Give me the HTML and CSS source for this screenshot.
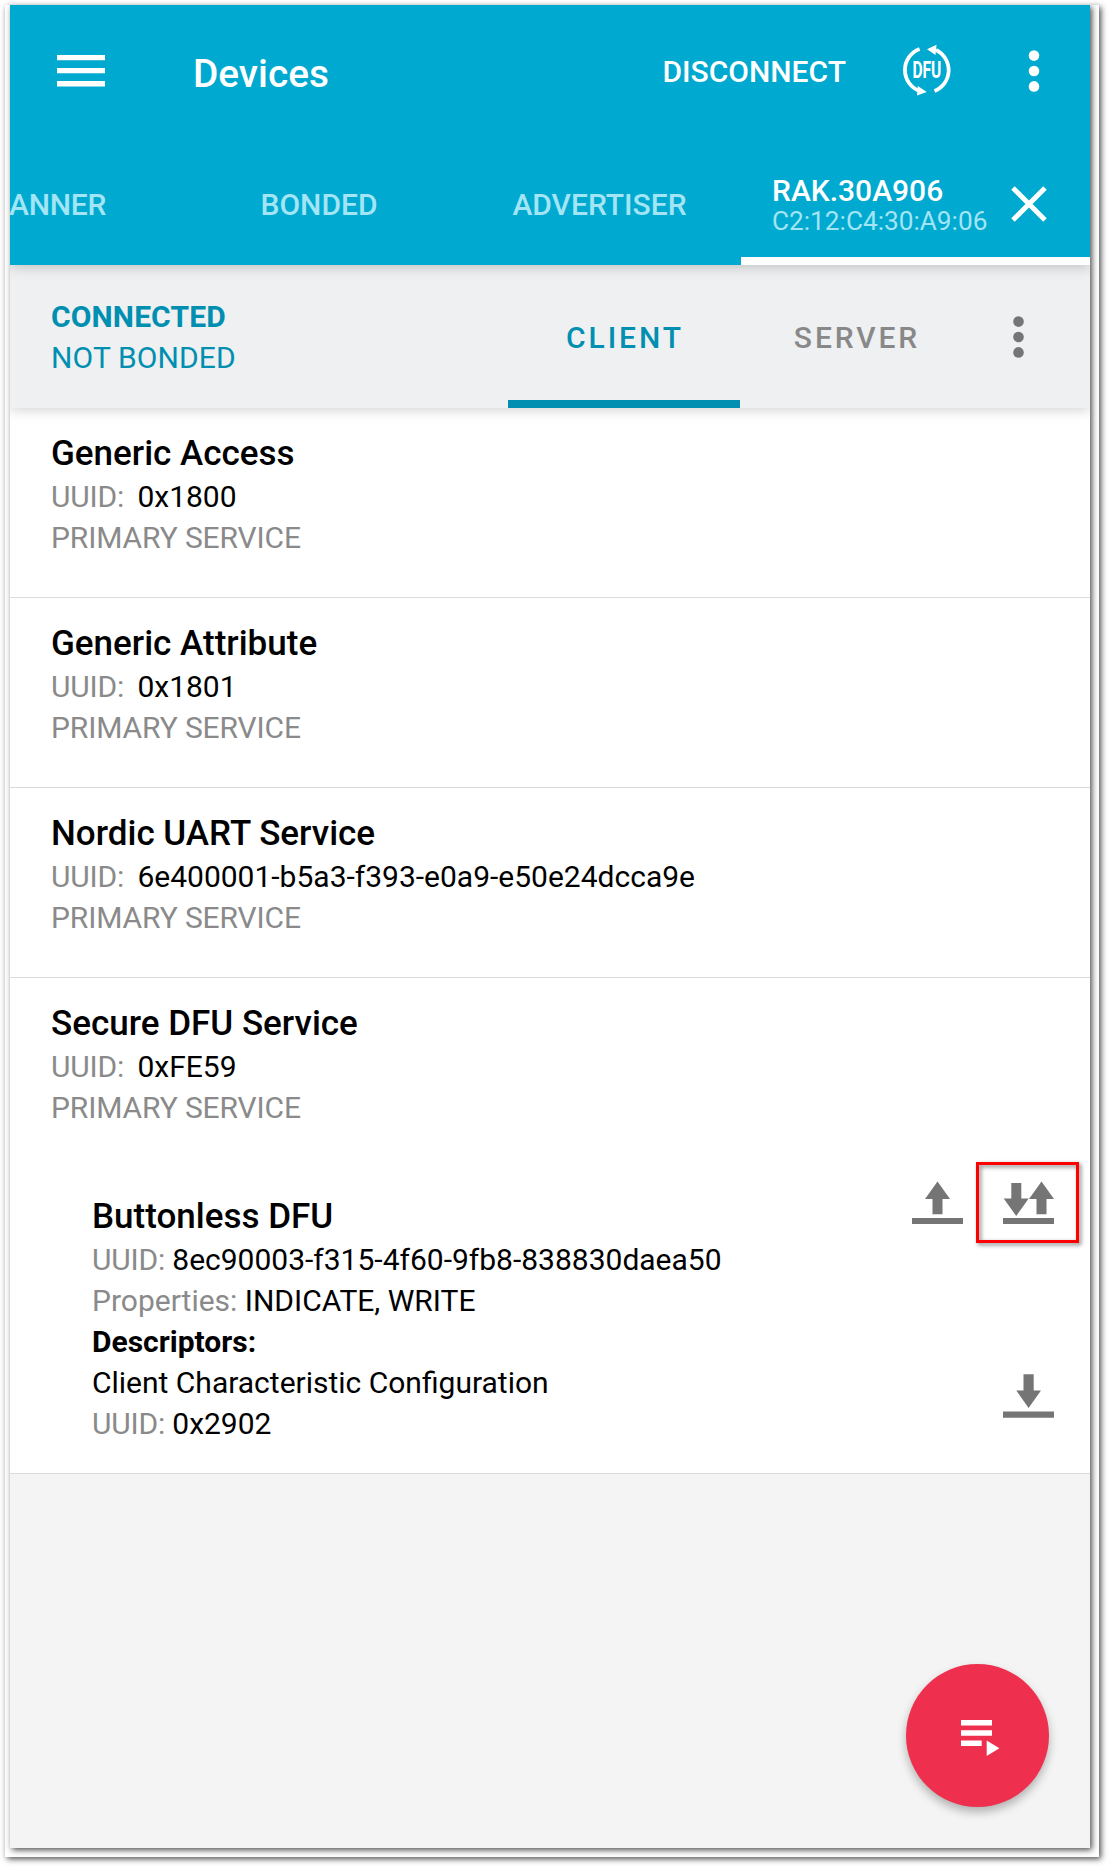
FILE: index.html
```html
<!DOCTYPE html>
<html lang="en">
<head>
<meta charset="utf-8">
<title>Devices</title>
<link rel="stylesheet" href="styles.css">
</head>
<body>
<div class="frame">
<main class="screen">
  <header class="appbar">
    <div class="toolbar">
      <svg class="menu" width="48" height="32" viewBox="0 0 48 32" fill="#fff"><path d="M0 0h48v5.3H0zM0 13h48v5.3H0zM0 26h48v5.6H0z"/></svg>
      <h1 class="title">Devices</h1>
      <span class="disconnect">DISCONNECT</span>
      <svg class="dfu" width="50" height="52" viewBox="0 0 50 52">
        <g fill="none" stroke="#fff" stroke-width="3.8">
          <path d="M17.6 5A22.4 22.4 0 0 0 17.5 47"/>
          <path d="M32.5 47A22.4 22.4 0 0 0 34 6"/>
        </g>
        <path fill="#fff" d="M25 5.2L34.5 .8L33.5 11ZM24.8 48L15.8 42L15 51.4Z"/>
        <text x="10.4" y="33.6" textLength="29" lengthAdjust="spacingAndGlyphs" class="dfu-text">DFU</text>
      </svg>
      <svg class="more" width="12" height="42" viewBox="0 0 12 42" fill="#fff"><circle cx="6" cy="5.6" r="5.3"/><circle cx="6" cy="21" r="5.3"/><circle cx="6" cy="36.4" r="5.3"/></svg>
    </div>
    <nav class="tabs">
      <span class="tab tab-first">ANNER</span>
      <span class="tab">BONDED</span>
      <span class="tab">ADVERTISER</span>
      <div class="tab-device">
        <div class="device">
          <span class="device-name">RAK.30A906</span>
          <span class="device-mac">C2:12:C4:30:A9:06</span>
        </div>
        <svg width="36" height="36" viewBox="0 0 36 36" stroke="#fff" stroke-width="5"><path d="M2 2L34 34M34 2L2 34"/></svg>
      </div>
    </nav>
  </header>

  <section class="status">
    <div class="state"><strong>CONNECTED</strong><span>NOT BONDED</span></div>
    <div class="role role-active">CLIENT</div>
    <div class="role">SERVER</div>
    <svg class="status-more" width="11" height="42" viewBox="0 0 11 42" fill="#757575"><ellipse cx="5.5" cy="5.6" rx="5.3" ry="5.3"/><ellipse cx="5.5" cy="21" rx="5.3" ry="5.3"/><ellipse cx="5.5" cy="36.4" rx="5.3" ry="5.3"/></svg>
  </section>

  <section class="service">
    <h2>Generic Access</h2>
    <p><span class="label key">UUID:</span>0x1800</p>
    <p class="label kind">PRIMARY SERVICE</p>
  </section>
  <section class="service">
    <h2>Generic Attribute</h2>
    <p><span class="label key">UUID:</span>0x1801</p>
    <p class="label kind">PRIMARY SERVICE</p>
  </section>
  <section class="service">
    <h2>Nordic UART Service</h2>
    <p><span class="label key">UUID:</span>6e400001-b5a3-f393-e0a9-e50e24dcca9e</p>
    <p class="label kind">PRIMARY SERVICE</p>
  </section>
  <section class="service service-open">
    <h2>Secure DFU Service</h2>
    <p><span class="label key">UUID:</span>0xFE59</p>
    <p class="label kind">PRIMARY SERVICE</p>
    <div class="characteristic">
      <div class="details">
        <h2>Buttonless DFU</h2>
        <p><span class="label uuid">UUID: </span>8ec90003-f315-4f60-9fb8-838830daea50</p>
        <p><span class="label">Properties: </span>INDICATE, WRITE</p>
        <p><b>Descriptors:</b></p>
        <p>Client Characteristic Configuration</p>
        <p><span class="label uuid">UUID: </span>0x2902</p>
      </div>
      <div class="actions">
        <div class="action-row">
          <svg width="51" height="43" viewBox="0 0 51 43" fill="#757575"><path d="M25.5 .5L38 18H30.5V33.3H20.5V18H13ZM0 37h51v6H0z"/></svg>
          <div class="highlighted">
            <svg width="51" height="43" viewBox="0 0 51 43" fill="#757575"><path d="M8.3 2H18.3V17.6H25.7L13.2 35L.7 17.6H8.3ZM38.5 .5L51 18H43.5V33.3H33.5V18H26ZM0 37h51v6H0z"/></svg>
          </div>
        </div>
        <svg width="51" height="44" viewBox="0 0 51 44" fill="#757575"><path d="M20.5 .3H30.7V16.6H38L25.6 34L13.3 16.6H20.5ZM0 37.6h51v6.2H0z"/></svg>
      </div>
    </div>
  </section>

  <button class="fab" aria-label="Macros">
    <svg width="39" height="36" viewBox="0 0 39 36" fill="#fff"><path d="M0 0h31v5.4H0zM0 10.3h31v5.4H0zM0 20.5h20.7v5.4H0zM25.7 20.5L38.4 28.2L25.7 36Z"/></svg>
  </button>
</main>
</div>
</body>
</html>
```

FILE: styles.css
```css
* { box-sizing: border-box; margin: 0; padding: 0; }

body {
  background: #fff;
  font-family: Roboto, sans-serif;
  font-size: 30px;
  line-height: 41px;
  color: #000;
  padding: 5px 9px 9px 5px;
}

.frame {
  height: 1852px;
  padding: 0 9px 9px 5px;
  background: #fff;
  box-shadow: 2px 2px 6px rgba(0, 0, 0, .7);
  overflow: hidden;
}

.screen {
  position: relative;
  height: 1843px;
  background: #f4f4f4;
  box-shadow: 2px 2px 6px rgba(0, 0, 0, .7);
}

.appbar {
  position: relative;
  z-index: 2;
  height: 260px;
  background: #00a9cf;
  color: #fff;
  box-shadow: 0 2px 12px rgba(0, 0, 0, .2);
  clip-path: inset(0 0 -20px 0);
}

.toolbar {
  display: flex;
  align-items: center;
  height: 132px;
  padding: 0 50px 0 47px;
}

.title {
  margin: 4px auto 0 88px;
  font-size: 38.8px;
  font-weight: 500;
}

.disconnect { font-weight: 500; }
.dfu { margin: 0 0 2px 56px; }
.dfu-text { font: 700 23px Roboto, sans-serif; fill: #fff; }
.more { margin-left: 76px; }

.tabs {
  display: grid;
  grid-template-columns: 170px 278px 283px 349px;
  height: 128px;
}

.tab {
  padding-top: 47px;
  text-align: center;
  font-weight: 500;
  color: #a3e5f5;
}

.tab-first { text-align: left; text-indent: -1px; letter-spacing: -.2px; }

.tab-device {
  display: flex;
  align-items: flex-start;
  padding: 48.5px 43.5px 0 31px;
  justify-content: space-between;
  border-bottom: 8px solid #fff;
}

.device {
  display: flex;
  flex-direction: column;
  margin-top: -12.5px;
}

.device-name { font-weight: 500; line-height: 36px; }
.device-mac { font-size: 26.2px; line-height: 24px; color: #a3e5f5; }

.status {
  position: relative;
  z-index: 1;
  display: flex;
  height: 143px;
  padding-left: 41px;
  background: #eef0f2;
  color: #008fb0;
  box-shadow: 0 2px 12px rgba(0, 0, 0, .18);
  clip-path: inset(0 0 -20px 0);
}

.state {
  display: flex;
  flex-direction: column;
  width: 457px;
  padding-top: 31px;
  letter-spacing: .12px;
}

.role {
  width: 232px;
  padding-top: 52px;
  border-bottom: 8px solid transparent;
  text-align: center;
  text-indent: 2px;
  letter-spacing: 2.9px;
  font-weight: 500;
  color: #888;
}

.role-active { color: #008fb0; border-color: #008fb0; }
.status-more { margin: 50.5px 0 0 41px; }

.service {
  height: 190px;
  padding: 23px 36px 0 41px;
  background: #fff;
  border-bottom: 1px solid #dadbdc;
}

.service-open { height: 496px; }

h2 {
  font-size: 35px;
  font-weight: 500;
  line-height: 45px;
}

.label { color: #8a8a8a; }
.key { display: inline-block; width: 86.4px; letter-spacing: -.2px; }
.kind { letter-spacing: -.12px; }
.uuid { letter-spacing: -.2px; }

.characteristic {
  display: flex;
  justify-content: space-between;
  margin-top: 53px;
  padding-left: 41px;
}

.details { padding-top: 13px; }

.actions {
  display: flex;
  flex-direction: column;
  align-items: flex-end;
  gap: 150px;
}

.action-row { display: flex; gap: 40px; }
svg { display: block; flex: none; overflow: visible; }

.highlighted { position: relative; }

.highlighted::after {
  content: "";
  position: absolute;
  inset: -19px -25px -19px -27px;
  border: 3px solid #f00;
  filter: drop-shadow(2px 2px 2px rgba(0, 0, 0, .5));
}

.fab {
  position: absolute;
  right: 41px;
  bottom: 41px;
  width: 143px;
  height: 143px;
  padding: 0 0 0 54.5px;
  border: 0;
  border-radius: 50%;
  background: #ee304e;
  box-shadow: 0 5px 10px rgba(0, 0, 0, .28);
}

.fab svg { margin-top: 5px; }
```
